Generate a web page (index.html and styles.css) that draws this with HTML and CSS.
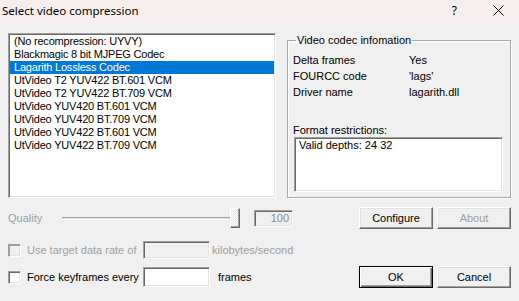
FILE: index.html
```html
<!DOCTYPE html>
<html lang="en">
<head>
  <meta charset="UTF-8" />
  <title>Select video compression</title>
  <link rel="stylesheet" href="styles.css">
</head>
<body>
  <div class="window">
    <div class="titlebar">
      <span class="title">Select video compression</span>
      <div class="caption-btns">
        <span class="help">?</span>
        <svg class="close" width="11" height="11" viewBox="0 0 11 11">
          <path d="M0.5 0.5 L10.5 10.5 M10.5 0.5 L0.5 10.5" stroke="#000" stroke-width="1" fill="none"/>
        </svg>
      </div>
    </div>

    <div class="dialog">
      <div class="top">
        <ul class="codec-list">
          <li>(No recompression: UYVY)</li>
          <li>Blackmagic 8 bit MJPEG Codec</li>
          <li class="selected">Lagarith Lossless Codec</li>
          <li>UtVideo T2 YUV422 BT.601 VCM</li>
          <li>UtVideo T2 YUV422 BT.709 VCM</li>
          <li>UtVideo YUV420 BT.601 VCM</li>
          <li>UtVideo YUV420 BT.709 VCM</li>
          <li>UtVideo YUV422 BT.601 VCM</li>
          <li>UtVideo YUV422 BT.709 VCM</li>
        </ul>

        <fieldset class="info">
          <legend>Video codec infomation</legend>
          <div class="info-grid">
            <span>Delta frames</span><span>Yes</span>
            <span>FOURCC code</span><span>'lags'</span>
            <span>Driver name</span><span>lagarith.dll</span>
          </div>
          <div class="restrict-label">Format restrictions:</div>
          <div class="restrict-box">Valid depths: 24 32</div>
        </fieldset>
      </div>

      <div class="row quality-row">
        <span class="quality-label disabled">Quality</span>
        <div class="slider">
          <div class="slider-line"></div>
          <div class="slider-thumb"></div>
        </div>
        <div class="value-box">100</div>
        <div class="btn-pair">
          <button class="btn">Configure</button>
          <button class="btn" disabled>About</button>
        </div>
      </div>

      <div class="row rate-row">
        <span class="check disabled-check"></span>
        <span class="check-label disabled">Use target data rate of</span>
        <div class="edit edit-disabled"></div>
        <span class="unit disabled">kilobytes/second</span>
      </div>

      <div class="row key-row">
        <span class="check"></span>
        <span class="check-label">Force keyframes every</span>
        <div class="edit"></div>
        <span class="unit frames">frames</span>
        <div class="btn-pair">
          <button class="btn btn-default">OK</button>
          <button class="btn">Cancel</button>
        </div>
      </div>
    </div>
  </div>
</body>
</html>
```

FILE: styles.css
```css
* {
  box-sizing: border-box;
}

body {
  margin: 0;
  font-family: "Liberation Sans", Arial, sans-serif;
  font-size: 11px;
  color: #000;
  background: #f0f0f0;
}

.window {
  width: 519px;
  height: 301px;
  background: #f0f0f0;
}

.titlebar {
  height: 23px;
  background: #f6eeec;
  display: flex;
  align-items: center;
  justify-content: space-between;
  padding: 0 0 2px 2px;
}

.title {
  font-family: "Noto Sans", sans-serif;
  font-size: 11.5px;
}

.caption-btns {
  display: flex;
  align-items: center;
  gap: 36px;
  padding-right: 15px;
}

.help {
  font-family: "Noto Sans", sans-serif;
  font-size: 12px;
}

.dialog {
  padding: 10px 8px 0 8px;
}

.top {
  display: flex;
  gap: 11px;
  height: 165px;
}

.codec-list {
  list-style: none;
  margin: 0;
  padding: 1px 0 0 0;
  width: 268px;
  height: 165px;
  background: #fff;
  border: 1px solid;
  border-color: #a0a0a0 #fff #fff #a0a0a0;
  box-shadow: inset 1px 1px #696969, inset -1px -1px #e3e3e3;
  overflow: hidden;
  letter-spacing: -0.2px;
}

.codec-list li {
  height: 13px;
  line-height: 13px;
  padding-left: 4px;
  margin: 0 1px;
  white-space: nowrap;
}

.codec-list li.selected {
  background: #0078d7;
  color: #fff;
}

.info {
  margin: 0;
  width: 224px;
  height: 165px;
  padding: 0 5px 5px 5px;
  border: 1px solid #a9a9a9;
  box-shadow: inset 1px 1px #fff, 1px 1px #fff;
  display: flex;
  flex-direction: column;
}

.info legend {
  padding: 0 1px;
  margin-left: 3px;
  line-height: 14px;
}

.info-grid {
  display: grid;
  grid-template-columns: 116px 1fr;
  grid-auto-rows: 16px;
  align-items: center;
  margin-top: 5px;
}

.restrict-label {
  margin-top: 24px;
  line-height: 13px;
}

.restrict-box {
  margin-left: 1px;
  width: 209px;
  flex: 1;
  background: #fff;
  padding: 1px 4px;
  line-height: 13px;
  border: 1px solid;
  border-color: #a0a0a0 #fff #fff #a0a0a0;
  box-shadow: inset 1px 1px #696969, inset -1px -1px #e3e3e3;
}

.row {
  display: flex;
  align-items: center;
}

.quality-row {
  margin-top: 9px;
  height: 22px;
}

.rate-row {
  margin-top: 12px;
  height: 18px;
}

.key-row {
  margin-top: 7px;
  height: 22px;
}

.disabled {
  color: #a0a0a0;
}

.quality-label {
  width: 54px;
}

.slider {
  width: 180px;
  height: 20px;
  display: flex;
  align-items: center;
}

.slider-line {
  flex: 1;
  height: 3px;
  border-top: 1px solid #a0a0a0;
  border-bottom: 1px solid #fff;
  background: #e3e3e3;
}

.slider-thumb {
  width: 10px;
  height: 20px;
  border: 1px solid;
  border-color: #fff #696969 #696969 #fff;
  box-shadow: inset -1px -1px #a0a0a0;
  background: repeating-conic-gradient(#fff 0 25%, #e6e6e6 0 50%) 0 0 / 2px 2px;
  margin-right: 2px;
}

.value-box {
  margin-left: 12px;
  width: 39px;
  height: 17px;
  line-height: 15px;
  text-align: right;
  padding-right: 3px;
  color: #8a8a8a;
  border: 1px solid;
  border-color: #a0a0a0 #fff #fff #a0a0a0;
  box-shadow: inset 1px 1px #696969, inset -1px -1px #e3e3e3;
}

.btn-pair {
  margin-left: auto;
  display: flex;
  gap: 4px;
}

.btn {
  width: 74px;
  height: 22px;
  padding: 0;
  font-family: inherit;
  font-size: 11px;
  color: #000;
  background: #f0f0f0;
  border: 1px solid;
  border-color: #fff #696969 #696969 #fff;
  box-shadow: inset -1px -1px #a0a0a0, inset 1px 1px #e3e3e3;
}

.btn:disabled {
  color: #a0a0a0;
}

.btn-default {
  border: 1px solid #000;
  box-shadow: inset 1px 1px #fff, inset -1px -1px #696969, inset -2px -2px #a0a0a0;
}

.check {
  width: 13px;
  height: 13px;
  background: #fff;
  border: 1px solid;
  border-color: #a0a0a0 #fff #fff #a0a0a0;
  box-shadow: inset 1px 1px #696969, inset -1px -1px #e3e3e3;
}

.disabled-check {
  background: #f0f0f0;
  box-shadow: inset 1px 1px #a0a0a0, inset -1px -1px #e3e3e3;
}

.check-label {
  margin-left: 6px;
  width: 116px;
}

.edit {
  width: 67px;
  height: 20px;
  background: #fff;
  border: 1px solid;
  border-color: #a0a0a0 #fff #fff #a0a0a0;
  box-shadow: inset 1px 1px #696969, inset -1px -1px #e3e3e3;
}

.edit-disabled {
  height: 18px;
  background: #f0f0f0;
}

.unit {
  margin-left: 2px;
}

.unit.frames {
  margin-left: 8px;
}
```
